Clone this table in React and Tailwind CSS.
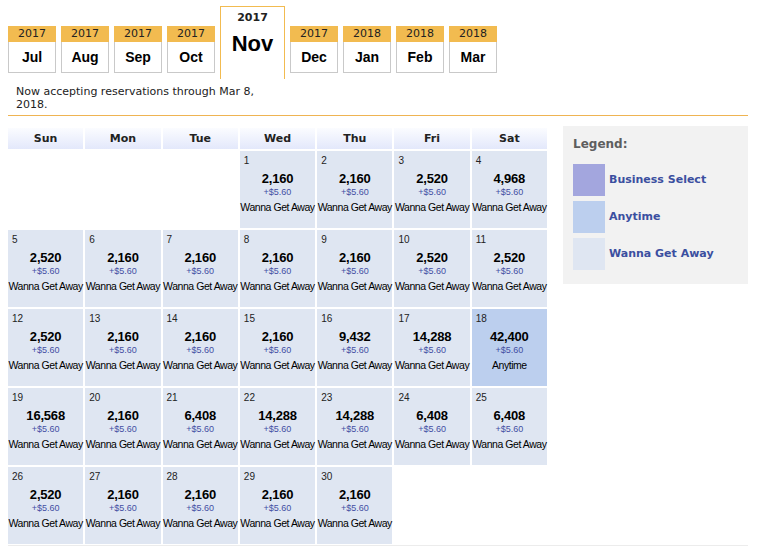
import React from 'react';

const months = [
    { y: '2017', m: 'Jul' },
    { y: '2017', m: 'Aug' },
    { y: '2017', m: 'Sep' },
    { y: '2017', m: 'Oct' },
    { y: '2017', m: 'Nov', active: true },
    { y: '2017', m: 'Dec' },
    { y: '2018', m: 'Jan' },
    { y: '2018', m: 'Feb' },
    { y: '2018', m: 'Mar' },
];

const days = ['Sun', 'Mon', 'Tue', 'Wed', 'Thu', 'Fri', 'Sat'];

// null = empty slot before/after the month
const cells = [
    null, null, null,
    [1, '2,160'], [2, '2,160'], [3, '2,520'], [4, '4,968'],
    [5, '2,520'], [6, '2,160'], [7, '2,160'], [8, '2,160'], [9, '2,160'], [10, '2,520'], [11, '2,520'],
    [12, '2,520'], [13, '2,160'], [14, '2,160'], [15, '2,160'], [16, '9,432'], [17, '14,288'], [18, '42,400', 'Anytime'],
    [19, '16,568'], [20, '2,160'], [21, '6,408'], [22, '14,288'], [23, '14,288'], [24, '6,408'], [25, '6,408'],
    [26, '2,520'], [27, '2,160'], [28, '2,160'], [29, '2,160'], [30, '2,160'],
    null, null,
];

const verdana = { fontFamily: '"DejaVu Sans", Verdana, sans-serif' };
const arial = { fontFamily: '"Liberation Sans", Arial, sans-serif' };

const MonthTab = ({ y, m, active }) => {
    if (active) {
        return (
            <div className="w-[65px] h-[73px] border border-b-0 border-[#f2bb50] bg-white flex flex-col items-center">
                <div className="mt-[4px] text-[11px] leading-[14px] font-bold text-[#222]" style={verdana}>{y}</div>
                <div className="mt-[7px] text-[22px] leading-[24px] font-bold text-black" style={arial}>{m}</div>
            </div>
        );
    }
    return (
        <div className="w-[48px] mt-[20px]">
            <div className="h-[16px] bg-[#f2bb50] text-center text-[11px] leading-[16px] text-[#222]" style={verdana}>{y}</div>
            <div className="h-[31px] pt-[1px] border border-t-0 border-[#c9c9c9] bg-white flex items-center justify-center text-[14px] font-bold text-black" style={arial}>{m}</div>
        </div>
    );
};

const DayCell = ({ cell }) => {
    if (!cell) return <div className="h-[77px]" />;
    const [d, pts, fare] = cell;
    const anytime = fare === 'Anytime';
    return (
        <div className={`h-[77px] pt-[3px] ${anytime ? 'bg-[#bccfee]' : 'bg-[#dfe6f2]'}`} style={arial}>
            <div className="pl-[4px] text-[10px] leading-[14px] text-[#222]">{d}</div>
            <div className="mt-[3px] text-center text-[13px] leading-[16px] font-bold tracking-[-0.2px] text-black">{pts}</div>
            <div className="text-center text-[9px] leading-[10px] text-[#434ea3]">+$5.60</div>
            <div className="mt-[3px] text-center text-[10.5px] leading-[14px] tracking-[-0.45px] text-black whitespace-nowrap">{fare || 'Wanna Get Away'}</div>
        </div>
    );
};

const legend = [
    { c: 'bg-[#a3a6de]', t: 'Business Select' },
    { c: 'bg-[#bccfee]', t: 'Anytime' },
    { c: 'bg-[#dfe6f2]', t: 'Wanna Get Away' },
];

const App = () => {
    return (
        <div className="w-[757px] h-[551px] bg-white overflow-hidden">
            <div className="ml-[8px] w-[740px]">
                {/* month tabs */}
                <div className="flex items-start gap-[5px] pt-[6px]">
                    {months.map((t) => <MonthTab key={t.m} {...t} />)}
                </div>

                <div className="pl-[8px] pt-[7px] w-[270px] text-[11px] leading-[12.5px] text-[#222]" style={verdana}>
                    Now accepting reservations through Mar 8, 2018.
                </div>

                <div className="mt-[4px] border-t border-[#efb452]" />

                <div className="flex items-start gap-[16px] pt-[10px] border-b border-[#ececec]">
                    {/* calendar */}
                    <div className="w-[539px] mt-[2px] grid grid-cols-7 gap-[2px] pb-[1px]">
                        {days.map((d) => (
                            <div key={d} className="h-[21px] pt-[1px] flex items-center justify-center bg-gradient-to-b from-[#fbfcff] to-[#e3e8fb] text-[11px] font-bold text-[#222]" style={verdana}>
                                {d}
                            </div>
                        ))}
                        {cells.map((c, i) => <DayCell key={i} cell={c} />)}
                    </div>

                    {/* legend */}
                    <div className="w-[185px] bg-[#f2f2f2] pt-[10px] pb-[14px] pl-[10px]" style={verdana}>
                        <div className="text-[12px] leading-[16px] font-bold text-[#5e5e5e]">Legend:</div>
                        <div className="mt-[12px] flex flex-col gap-[5px]">
                            {legend.map((l) => (
                                <div key={l.t} className="flex items-center gap-[4px]">
                                    <div className={`w-[32px] h-[32px] ${l.c}`} />
                                    <div className="text-[11px] font-bold text-[#3b4fa0]">{l.t}</div>
                                </div>
                            ))}
                        </div>
                    </div>
                </div>
            </div>
        </div>
    );
};

export default App;
